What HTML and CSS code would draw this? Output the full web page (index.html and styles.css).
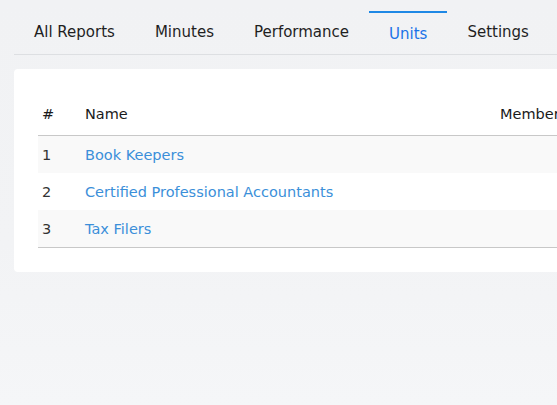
FILE: index.html
```html
<!DOCTYPE html>
<html>
<head>
<meta charset="utf-8">
<link rel="stylesheet" href="styles.css">
</head>
<body>
<div class="page">
  <nav class="tabs">
    <a class="tab">All Reports</a>
    <a class="tab">Minutes</a>
    <a class="tab">Performance</a>
    <a class="tab active">Units</a>
    <a class="tab">Settings</a>
  </nav>
  <section class="card">
    <table class="units">
      <thead>
        <tr><th class="num">#</th><th class="name">Name</th><th class="members">Members</th></tr>
      </thead>
      <tbody>
        <tr><td class="num">1</td><td class="name"><a>Book Keepers</a></td><td class="members"></td></tr>
        <tr><td class="num">2</td><td class="name"><a>Certified Professional Accountants</a></td><td class="members"></td></tr>
        <tr><td class="num">3</td><td class="name"><a>Tax Filers</a></td><td class="members"></td></tr>
      </tbody>
    </table>
  </section>
</div>
</body>
</html>
```
FILE: styles.css
```css
html, body {
  margin: 0;
  height: 100%;
}
body {
  background: linear-gradient(180deg, #f1f2f4 0%, #f2f3f5 60%, #f5f6f8 100%);
  font-family: "DejaVu Sans", sans-serif;
  color: #1f1f1f;
  overflow: hidden;
}
.page {
  width: 760px;
  padding: 11px 0 0 14px;
}
.tabs {
  display: flex;
  border-bottom: 1px solid #dddfe2;
}
.tab {
  padding: 11px 20px 10px;
  font-size: 15px;
  line-height: 20px;
  color: #1f1f1f;
}
.tab.active {
  border-top: 2px solid #1e88e5;
  color: #1a73e8;
}
.card {
  margin-top: 14px;
  background: #fff;
  border-radius: 4px;
  padding: 24px;
}
.units {
  width: 100%;
  table-layout: fixed;
  border-collapse: collapse;
  font-size: 14.5px;
}
.units th {
  text-align: left;
  font-weight: 500;
  height: 42px;
  padding: 0 4px;
  border-bottom: 1px solid #c8c8c8;
  vertical-align: middle;
  color: #1a1a1a;
}
.units td {
  height: 37px;
  padding: 0 4px;
  vertical-align: middle;
  color: #333;
}
.units tbody tr:nth-child(odd) td {
  background: #f9f9f9;
}
.units tbody tr:last-child td {
  border-bottom: 1px solid #c8c8c8;
}
.units .num {
  width: 35px;
}
.units .name {
  width: 407px;
}
.units a {
  color: #3b8fd9;
}
```
